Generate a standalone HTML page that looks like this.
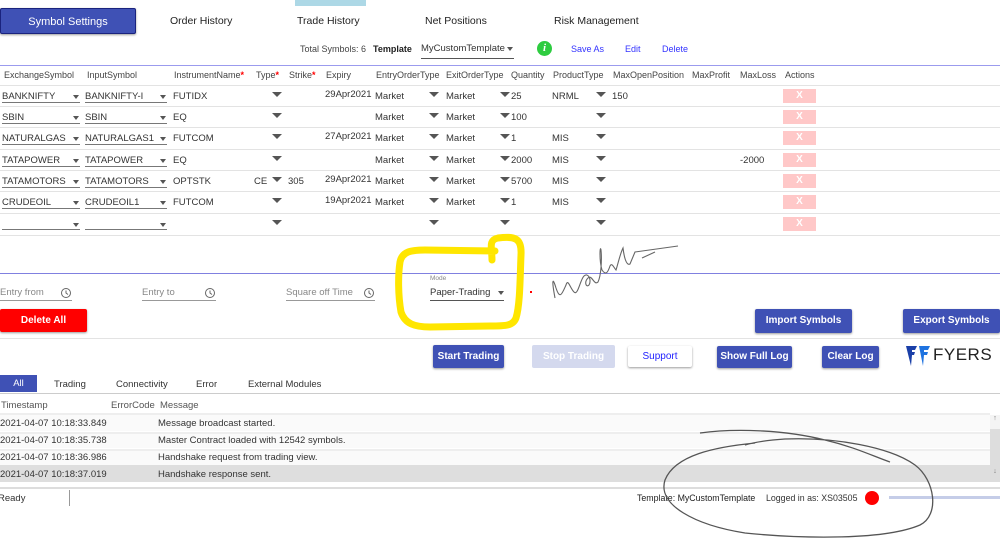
<!DOCTYPE html>
<html><head><meta charset="utf-8"><style>
*{margin:0;padding:0;box-sizing:border-box}
body{width:1000px;height:539px;position:relative;overflow:hidden;background:#fff;font-family:"Liberation Sans",sans-serif;color:#333;font-size:9px}
.a{position:absolute;white-space:nowrap}
.btn{position:absolute;background:#3f51b5;color:#fff;font-weight:bold;font-size:10px;text-align:center;border-radius:2px;box-shadow:0 1px 2px rgba(0,0,0,.4)}
.tab{position:absolute;top:15px;font-size:10.5px;color:#222}
.dd{position:absolute;border-bottom:1px solid #777;height:14px;font-size:9.5px;padding-top:2px}
.ar{position:absolute;width:0;height:0;border-left:3.5px solid transparent;border-right:3.5px solid transparent;border-top:4px solid #555}
.ar2{position:absolute;width:0;height:0;border-left:5px solid transparent;border-right:5px solid transparent;border-top:5px solid #555}
.hl{position:absolute;left:0;width:1000px;height:1px;background:#e3e3e3}
.x{position:absolute;left:783px;width:33px;height:14px;background:#ffc8c8;color:#fff;font-weight:bold;text-align:center;font-size:10px;line-height:14px}
.t{font-size:9.5px;color:#333}
.lg{position:absolute;font-size:9.5px;color:#333}
</style></head><body>
<div class="a" style="left:295px;top:0;width:71px;height:6px;background:#add8e6"></div>
<div class="btn" style="left:0;top:8px;width:136px;height:26px;line-height:26px;font-weight:normal;font-size:11px;border:1px solid #1a237e">Symbol Settings</div>
<div class="tab" style="left:170px">Order History</div>
<div class="tab" style="left:297px">Trade History</div>
<div class="tab" style="left:425px">Net Positions</div>
<div class="tab" style="left:554px">Risk Management</div>

<div class="a" style="left:300px;top:44px;color:#444">Total Symbols: 6</div>
<div class="a" style="left:373px;top:44px;font-weight:bold;color:#222">Template</div>
<div class="a" style="left:421px;top:43px;font-size:9.5px;width:93px;height:16px;border-bottom:1px solid #555">MyCustomTemplate</div>
<div class="ar" style="left:507px;top:47px"></div>
<div class="a" style="left:537px;top:41px;width:15px;height:15px;border-radius:50%;background:#2ecc40;color:#fff;font-weight:bold;font-style:italic;text-align:center;line-height:15px;font-size:11px;font-family:'Liberation Serif',serif">i</div>
<div class="a" style="left:571px;top:44px;color:#33f">Save As</div>
<div class="a" style="left:625px;top:44px;color:#33f">Edit</div>
<div class="a" style="left:662px;top:44px;color:#33f">Delete</div>
<div class="a" style="left:0;top:65px;width:1000px;height:1px;background:#9b9bee"></div>

<div class="a" style="top:70px;left:0;color:#444;font-size:9px">
<span class="a" style="left:4px">ExchangeSymbol</span><span class="a" style="left:87px">InputSymbol</span><span class="a" style="left:174px">InstrumentName<b style="color:red">*</b></span><span class="a" style="left:256px">Type<b style="color:red">*</b></span><span class="a" style="left:289px">Strike<b style="color:red">*</b></span><span class="a" style="left:326px">Expiry</span><span class="a" style="left:376px">EntryOrderType</span><span class="a" style="left:446px">ExitOrderType</span><span class="a" style="left:511px">Quantity</span><span class="a" style="left:553px">ProductType</span><span class="a" style="left:613px">MaxOpenPosition</span><span class="a" style="left:692px">MaxProfit</span><span class="a" style="left:740px">MaxLoss</span><span class="a" style="left:785px">Actions</span>
</div>
<div class="hl" style="top:85px"></div>

<div class="dd" style="left:2px;top:89px;width:78px">BANKNIFTY</div><div class="ar" style="left:73px;top:95px"></div>
<div class="dd" style="left:85px;top:89px;width:82px">BANKNIFTY-I</div><div class="ar" style="left:160px;top:95px"></div>
<div class="a t" style="left:173px;top:91px">FUTIDX</div><div class="ar2" style="left:272px;top:92px"></div>
<div class="a t" style="left:325px;top:89px">29Apr2021</div>
<div class="a t" style="left:375px;top:91px">Market</div><div class="ar2" style="left:429px;top:92px"></div>
<div class="a t" style="left:446px;top:91px">Market</div><div class="ar2" style="left:500px;top:92px"></div>
<div class="a t" style="left:511px;top:91px">25</div>
<div class="a t" style="left:552px;top:91px">NRML</div><div class="ar2" style="left:596px;top:92px"></div>
<div class="a t" style="left:612px;top:91px">150</div>
<div class="x" style="top:89px">X</div>
<div class="hl" style="top:106px"></div>

<div class="dd" style="left:2px;top:110px;width:78px">SBIN</div><div class="ar" style="left:73px;top:116px"></div>
<div class="dd" style="left:85px;top:110px;width:82px">SBIN</div><div class="ar" style="left:160px;top:116px"></div>
<div class="a t" style="left:173px;top:112px">EQ</div><div class="ar2" style="left:272px;top:113px"></div>
<div class="a t" style="left:375px;top:112px">Market</div><div class="ar2" style="left:429px;top:113px"></div>
<div class="a t" style="left:446px;top:112px">Market</div><div class="ar2" style="left:500px;top:113px"></div>
<div class="a t" style="left:511px;top:112px">100</div><div class="ar2" style="left:596px;top:113px"></div>
<div class="x" style="top:110px">X</div>
<div class="hl" style="top:127px"></div>

<div class="dd" style="left:2px;top:131px;width:78px">NATURALGAS</div><div class="ar" style="left:73px;top:137px"></div>
<div class="dd" style="left:85px;top:131px;width:82px">NATURALGAS1</div><div class="ar" style="left:160px;top:137px"></div>
<div class="a t" style="left:173px;top:133px">FUTCOM</div><div class="ar2" style="left:272px;top:134px"></div>
<div class="a t" style="left:325px;top:131px">27Apr2021</div>
<div class="a t" style="left:375px;top:133px">Market</div><div class="ar2" style="left:429px;top:134px"></div>
<div class="a t" style="left:446px;top:133px">Market</div><div class="ar2" style="left:500px;top:134px"></div>
<div class="a t" style="left:511px;top:133px">1</div>
<div class="a t" style="left:552px;top:133px">MIS</div><div class="ar2" style="left:596px;top:134px"></div>
<div class="x" style="top:131px">X</div>
<div class="hl" style="top:149px"></div>

<div class="dd" style="left:2px;top:153px;width:78px">TATAPOWER</div><div class="ar" style="left:73px;top:159px"></div>
<div class="dd" style="left:85px;top:153px;width:82px">TATAPOWER</div><div class="ar" style="left:160px;top:159px"></div>
<div class="a t" style="left:173px;top:155px">EQ</div><div class="ar2" style="left:272px;top:156px"></div>
<div class="a t" style="left:375px;top:155px">Market</div><div class="ar2" style="left:429px;top:156px"></div>
<div class="a t" style="left:446px;top:155px">Market</div><div class="ar2" style="left:500px;top:156px"></div>
<div class="a t" style="left:511px;top:155px">2000</div>
<div class="a t" style="left:552px;top:155px">MIS</div><div class="ar2" style="left:596px;top:156px"></div>
<div class="a t" style="left:740px;top:155px">-2000</div>
<div class="x" style="top:153px">X</div>
<div class="hl" style="top:170px"></div>

<div class="dd" style="left:2px;top:174px;width:78px">TATAMOTORS</div><div class="ar" style="left:73px;top:180px"></div>
<div class="dd" style="left:85px;top:174px;width:82px">TATAMOTORS</div><div class="ar" style="left:160px;top:180px"></div>
<div class="a t" style="left:173px;top:176px">OPTSTK</div>
<div class="a t" style="left:254px;top:176px">CE</div><div class="ar2" style="left:272px;top:177px"></div>
<div class="a t" style="left:288px;top:176px">305</div>
<div class="a t" style="left:325px;top:174px">29Apr2021</div>
<div class="a t" style="left:375px;top:176px">Market</div><div class="ar2" style="left:429px;top:177px"></div>
<div class="a t" style="left:446px;top:176px">Market</div><div class="ar2" style="left:500px;top:177px"></div>
<div class="a t" style="left:511px;top:176px">5700</div>
<div class="a t" style="left:552px;top:176px">MIS</div><div class="ar2" style="left:596px;top:177px"></div>
<div class="x" style="top:174px">X</div>
<div class="hl" style="top:191px"></div>

<div class="dd" style="left:2px;top:195px;width:78px">CRUDEOIL</div><div class="ar" style="left:73px;top:201px"></div>
<div class="dd" style="left:85px;top:195px;width:82px">CRUDEOIL1</div><div class="ar" style="left:160px;top:201px"></div>
<div class="a t" style="left:173px;top:197px">FUTCOM</div><div class="ar2" style="left:272px;top:198px"></div>
<div class="a t" style="left:325px;top:195px">19Apr2021</div>
<div class="a t" style="left:375px;top:197px">Market</div><div class="ar2" style="left:429px;top:198px"></div>
<div class="a t" style="left:446px;top:197px">Market</div><div class="ar2" style="left:500px;top:198px"></div>
<div class="a t" style="left:511px;top:197px">1</div>
<div class="a t" style="left:552px;top:197px">MIS</div><div class="ar2" style="left:596px;top:198px"></div>
<div class="x" style="top:195px">X</div>
<div class="hl" style="top:213px"></div>

<div class="dd" style="left:2px;top:216px;width:78px"></div><div class="ar" style="left:73px;top:223px"></div>
<div class="dd" style="left:85px;top:216px;width:82px"></div><div class="ar" style="left:160px;top:223px"></div>
<div class="ar2" style="left:272px;top:220px"></div>
<div class="ar2" style="left:429px;top:220px"></div>
<div class="ar2" style="left:500px;top:220px"></div>
<div class="ar2" style="left:596px;top:220px"></div>
<div class="x" style="top:217px">X</div>
<div class="hl" style="top:235px"></div>

<div class="a" style="left:0;top:273px;width:1000px;height:1px;background:#8080e0"></div>

<div class="a" style="left:0;top:287px;width:72px;height:14px;border-bottom:1px solid #999;color:#888;font-size:9.5px">Entry from</div>
<div class="a" style="left:142px;top:287px;width:74px;height:14px;border-bottom:1px solid #999;color:#888;font-size:9.5px">Entry to</div>
<div class="a" style="left:286px;top:287px;width:89px;height:14px;border-bottom:1px solid #999;color:#888;font-size:9.5px">Square off Time</div>
<svg class="a" style="left:0;top:286px" width="380" height="14"><g fill="none" stroke="#666" stroke-width="1"><circle cx="66" cy="7" r="4.5"/><path d="M66 4.5V7L68 8.5"/><circle cx="210" cy="7" r="4.5"/><path d="M210 4.5V7L212 8.5"/><circle cx="369" cy="7" r="4.5"/><path d="M369 4.5V7L371 8.5"/></g></svg>

<div class="a" style="left:430px;top:275px;font-size:6.5px;color:#888">Mode</div>
<div class="a" style="left:430px;top:287px;width:74px;height:14px;border-bottom:1px solid #555;font-size:9.5px">Paper-Trading</div><div class="ar" style="left:498px;top:291px"></div>
<div class="a" style="left:530px;top:291px;width:2px;height:2px;background:red"></div>

<svg class="a" style="left:380px;top:230px" width="320" height="110" viewBox="0 0 320 110">
<path d="M112 30 C112 18 108 10 118 8 C135 6 142 8 141 25 C140 50 140 75 136 88 C133 96 125 96 110 96 L50 97 C35 97 25 94 21 82 C18 65 18 45 20 32 C22 22 30 20 45 20 L115 21" fill="none" stroke="#ffe600" stroke-width="7" stroke-linejoin="round" stroke-linecap="round"/>
<path d="M175 68 C172 52 172 45 176 58 C180 70 182 64 186 55 C188 48 190 58 194 62 C198 66 200 50 204 46 C208 42 212 50 209 55 C206 58 204 52 208 48 C212 44 214 56 218 52 C221 46 222 30 221 20 C220 14 219 30 222 40 C226 46 228 42 230 36 C232 32 234 38 236 40 C238 34 240 24 243 18 C244 26 246 36 250 34 L255 22 L298 16 M262 28 L275 22" fill="none" stroke="#666" stroke-width="1.1"/>
</svg>

<div class="btn" style="left:0;top:309px;width:87px;height:23px;line-height:23px;background:#f00">Delete All</div>
<div class="btn" style="left:755px;top:309px;width:97px;height:24px;line-height:24px">Import Symbols</div>
<div class="btn" style="left:903px;top:309px;width:97px;height:24px;line-height:24px">Export Symbols</div>
<div class="hl" style="top:338px"></div>

<div class="btn" style="left:433px;top:345px;width:71px;height:23px;line-height:23px">Start Trading</div>
<div class="btn" style="left:532px;top:345px;width:83px;height:23px;line-height:23px;background:#d4d9ee;box-shadow:none">Stop Trading</div>
<div class="btn" style="left:628px;top:346px;width:64px;height:21px;line-height:21px;background:#fff;color:#22f;font-weight:normal">Support</div>
<div class="btn" style="left:717px;top:346px;width:75px;height:22px;line-height:22px">Show Full Log</div>
<div class="btn" style="left:822px;top:346px;width:57px;height:22px;line-height:22px">Clear Log</div>
<svg class="a" style="left:905px;top:344px" width="26" height="24" viewBox="0 0 26 24"><path d="M1 2 H12 L10 6 H7 V8 H10 L9 11 H7 L6 22 Z" fill="#1a3fa8"/><path d="M14 2 H25 L23 6 H19 V8 H23 L22 11 H19 L18 22 Z" fill="#1e73e0"/></svg>
<div class="a" style="left:933px;top:345px;font-size:17px;color:#222;letter-spacing:0.5px">FYERS</div>

<div class="a" style="left:0;top:375px;width:37px;height:17px;background:#3f51b5;color:#fff;font-size:9.5px;line-height:17px;text-align:center">All</div>
<div class="lg" style="left:54px;top:379px">Trading</div>
<div class="lg" style="left:116px;top:379px">Connectivity</div>
<div class="lg" style="left:196px;top:379px">Error</div>
<div class="lg" style="left:248px;top:379px">External Modules</div>
<div class="a" style="left:0;top:393px;width:1000px;height:1px;background:#ccc"></div>
<div class="lg" style="left:1px;top:400px;color:#555">Timestamp</div>
<div class="lg" style="left:111px;top:400px;color:#555">ErrorCode</div>
<div class="lg" style="left:160px;top:400px;color:#555">Message</div>
<div class="a" style="left:0;top:413px;width:990px;height:2px;background:#eee"></div>
<div class="a" style="left:0;top:415px;width:990px;height:16px;background:#fafafa"></div>
<div class="a" style="left:0;top:432px;width:990px;height:16px;background:#fafafa;border-top:2px solid #eee"></div>
<div class="a" style="left:0;top:449px;width:990px;height:16px;background:#fafafa;border-top:2px solid #eee"></div>
<div class="a" style="left:0;top:465px;width:990px;height:17px;background:#dedede"></div>
<div class="lg" style="left:0;top:418px">2021-04-07 10:18:33.849</div><div class="lg" style="left:158px;top:418px">Message broadcast started.</div>
<div class="lg" style="left:0;top:435px">2021-04-07 10:18:35.738</div><div class="lg" style="left:158px;top:435px">Master Contract loaded with 12542 symbols.</div>
<div class="lg" style="left:0;top:452px">2021-04-07 10:18:36.986</div><div class="lg" style="left:158px;top:452px">Handshake request from trading view.</div>
<div class="lg" style="left:0;top:469px">2021-04-07 10:18:37.019</div><div class="lg" style="left:158px;top:469px">Handshake response sent.</div>
<div class="a" style="left:990px;top:415px;width:10px;height:67px;background:#ddd"></div>
<div class="a" style="left:990px;top:415px;width:10px;height:14px;background:#f4f4f4;font-size:7px;text-align:center;color:#777">↑</div>
<div class="a" style="left:990px;top:468px;width:10px;height:14px;font-size:7px;text-align:center;color:#777">↓</div>
<div class="a" style="left:0;top:487px;width:1000px;height:2px;background:#ddd"></div>

<div class="lg" style="left:-2px;top:493px">Ready</div>
<div class="a" style="left:69px;top:490px;width:1px;height:16px;background:#999"></div>
<div class="lg" style="left:637px;top:493px;color:#222;font-size:8.8px">Template: MyCustomTemplate</div>
<div class="lg" style="left:766px;top:493px;font-size:8.8px">Logged in as: XS03505</div>
<div class="a" style="left:865px;top:491px;width:14px;height:14px;border-radius:50%;background:#f00"></div>
<div class="a" style="left:889px;top:496px;width:111px;height:3px;background:#c5cde8"></div>
<svg class="a" style="left:655px;top:425px" width="290" height="114" viewBox="0 0 290 114"><path d="M100 18 C60 22 20 30 10 55 C2 80 40 100 90 108 C150 114 230 115 265 100 C285 90 280 55 260 40 C235 22 180 12 130 14 C115 15 100 17 90 20 M45 8 C80 3 130 5 170 15 C200 22 220 32 235 37" fill="none" stroke="#555" stroke-width="1.3"/></svg>
</body></html>
